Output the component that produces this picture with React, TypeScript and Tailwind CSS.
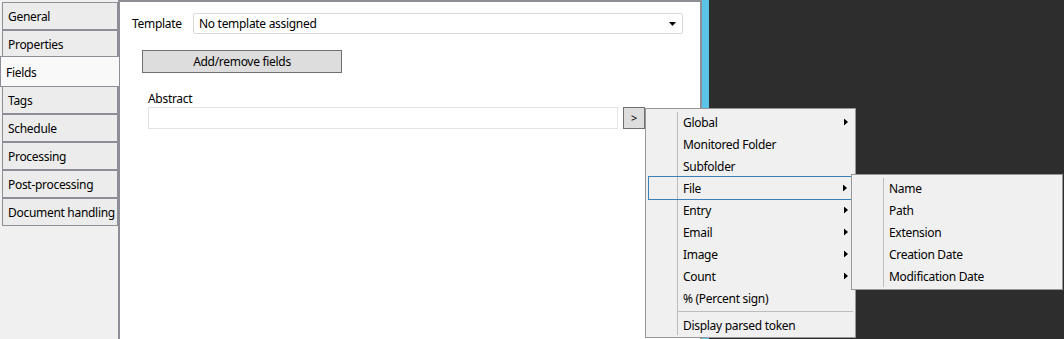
import React from 'react';

const tabs = ['General', 'Properties', 'Fields', 'Tags', 'Schedule', 'Processing', 'Post-processing', 'Document handling'];

const menuItems: { label: string; sub?: boolean; active?: boolean }[] = [
    { label: 'Global', sub: true },
    { label: 'Monitored Folder' },
    { label: 'Subfolder' },
    { label: 'File', sub: true, active: true },
    { label: 'Entry', sub: true },
    { label: 'Email', sub: true },
    { label: 'Image', sub: true },
    { label: 'Count', sub: true },
    { label: '% (Percent sign)' },
];

const fileItems = ['Name', 'Path', 'Extension', 'Creation Date', 'Modification Date'];

function Arrow() {
    return (
        <svg width="4" height="7" viewBox="0 0 4 7" className="absolute right-[5px] top-1/2 -translate-y-1/2">
            <path d="M0 0 L4 3.5 L0 7 Z" fill="#000" />
        </svg>
    );
}

function MenuRow({ label, sub, active }: { label: string; sub?: boolean; active?: boolean }) {
    return (
        <div
            className={`relative flex items-center pt-[2px] ${active ? 'border border-[#3d7fb8] -my-px h-[24px] pl-[34px]' : 'h-[22px] pl-[35px]'}`}
        >
            {label}
            {sub && <Arrow />}
        </div>
    );
}

export default function App() {
    return (
        <div
            className="relative flex w-[1064px] h-[339px] overflow-hidden bg-[#f0f0f0] text-[12px] tracking-[-0.3px] text-black"
            style={{ fontFamily: '"Noto Sans", "Segoe UI", sans-serif' }}
        >
            {/* tab strip */}
            <div className="w-[118px] shrink-0 pt-[2px] flex flex-col">
                {tabs.map((t) =>
                    t === 'Fields' ? (
                        <div
                            key={t}
                            className="relative z-10 -mt-[2px] -mb-[1px] h-[31px] w-[119px] border border-r-0 border-[#8e8f96] bg-[#f9f9f9] flex items-center pt-[2px] pl-[5px]"
                        >
                            {t}
                        </div>
                    ) : (
                        <div
                            key={t}
                            className="ml-[2px] h-[28px] border border-[#8e8f96] bg-[#ececec] flex items-center pt-[2px] pl-[5px] whitespace-nowrap"
                        >
                            {t}
                        </div>
                    )
                )}
            </div>

            {/* content panel */}
            <div className="w-[584px] shrink-0 bg-white border-l-2 border-t-2 border-r-2 border-[#8e8f96] flex flex-col">
                <div className="flex items-center mt-[11px] pl-[12px]">
                    <span className="w-[61px] pt-[1px]">Template</span>
                    <div className="relative w-[490px] h-[21px] border border-[#d9d9d9] rounded-[2px] flex items-center pt-[1px] pl-[5px]">
                        No template assigned
                        <svg width="7" height="4" viewBox="0 0 7 4" className="absolute right-[6px] top-[8px]">
                            <path d="M0 0 L7 0 L3.5 4 Z" fill="#000" />
                        </svg>
                    </div>
                </div>
                <div className="ml-[22px] mt-[16px] w-[200px] h-[23px] bg-[#dddddd] border border-[#707070] flex items-center justify-center pt-[1px]">
                    Add/remove fields
                </div>
                <div className="ml-[28px] mt-[18px] leading-[16px]">Abstract</div>
                <div className="ml-[28px] flex">
                    <div className="w-[470px] h-[22px] border border-[#e3e3e3]" />
                    <div className="ml-[5px] w-[22px] h-[22px] bg-[#dddddd] border border-[#707070] flex items-center justify-center text-[11px]">
                        &gt;
                    </div>
                </div>
            </div>

            <div className="w-[7px] shrink-0 bg-[#5bc3e6]" />
            <div className="flex-1 bg-[#2d2d2d]" />

            {/* context menu */}
            <div className="absolute left-[645px] top-[108px] w-[211px] h-[230px] bg-[#f0f0f0] border border-[#979797] pt-[2px] px-[2px] z-20">
                <div className="absolute left-[31px] top-[3px] bottom-[2px] w-px bg-[#bdbdbd]" />
                {menuItems.map((m) => (
                    <MenuRow key={m.label} {...m} />
                ))}
                <div className="h-[5px] flex items-center pl-[30px]">
                    <div className="h-px w-full bg-[#bdbdbd]" />
                </div>
                <div className="h-[22px] flex items-center pt-[2px] pl-[35px]">Display parsed token</div>
            </div>

            {/* submenu */}
            <div className="absolute left-[851px] top-[174px] w-[212px] h-[116px] bg-[#f0f0f0] border border-[#979797] pt-[2px] px-[2px] z-30">
                <div className="absolute left-[31px] top-[3px] bottom-[2px] w-px bg-[#bdbdbd]" />
                {fileItems.map((f) => (
                    <div key={f} className="h-[22px] flex items-center pt-[2px] pl-[35px]">
                        {f}
                    </div>
                ))}
            </div>
        </div>
    );
}
